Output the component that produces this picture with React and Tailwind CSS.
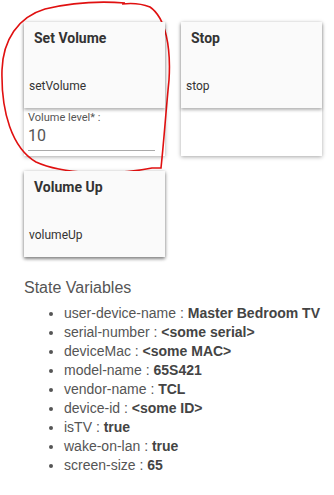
import React from 'react';

const stateVars = [
  ['user-device-name', 'Master Bedroom TV'],
  ['serial-number', '<some serial>'],
  ['deviceMac', '<some MAC>'],
  ['model-name', '65S421'],
  ['vendor-name', 'TCL'],
  ['device-id', '<some ID>'],
  ['isTV', 'true'],
  ['wake-on-lan', 'true'],
  ['screen-size', '65'],
];

function CommandCard({ title, cmd, children, extra }) {
  return (
    <div className="w-[141px] flex flex-col shadow-[0_1px_4px_rgba(0,0,0,0.35)]">
      <div className="h-[86px] bg-[#fafafa] flex flex-col shadow-[0_2px_3px_rgba(0,0,0,0.3)] relative z-10">
        <div className="pl-[10px] pt-[6px] text-[14px] font-bold text-[#333] font-['Roboto',sans-serif]">{title}</div>
        <div className="pl-[5px] mt-[28px] text-[12px] text-[#333] font-['Roboto',sans-serif]">{cmd}</div>
      </div>
      {extra && <div className="h-[48px] bg-white">{children}</div>}
    </div>
  );
}

export default function App() {
  return (
    <div className="relative w-[334px] h-[495px] bg-white overflow-hidden">
      <div className="pl-[24px] pt-[22px]">
        <div className="flex gap-[16px]">
          <CommandCard title="Set Volume" cmd="setVolume" extra>
            <div className="px-[4px] pt-[3px] font-['Roboto',sans-serif]">
              <div className="text-[11px] text-[#555] leading-[14px]">Volume level* :</div>
              <div className="text-[16px] text-[#555] leading-[20px] mt-[1px] border-b border-[#aaa] pb-[4px] mr-[6px]">10</div>
            </div>
          </CommandCard>
          <CommandCard title="Stop" cmd="stop" extra />
        </div>
        <div className="mt-[15px]">
          <CommandCard title="Volume Up" cmd="volumeUp" />
        </div>
        <div className="mt-[21px] text-[16px] text-[#555] font-['Liberation_Sans',Arial,sans-serif] leading-[20px]">State Variables</div>
        <ul className="mt-[6px] pl-[40px] list-disc text-[14px] text-[#555] font-['Liberation_Sans',Arial,sans-serif] leading-[19px]">
          {stateVars.map(([k, v]) => (
            <li key={k}>
              {k} : <span className="font-bold text-[#444]">{v}</span>
            </li>
          ))}
        </ul>
      </div>
      <svg className="absolute left-0 top-0 pointer-events-none" width="334" height="200" viewBox="0 0 334 200">
        <path
          d="M125,3 C100,1 70,3 45,9 C18,17 3,40 2,70 C1,112 12,148 36,162 C62,174 112,176 152,168 L161,168 C164,140 166,110 169,80 C171,48 166,18 150,7 C140,3 130,3 122,4"
          fill="none"
          stroke="#e01010"
          strokeWidth="1.6"
        />
      </svg>
    </div>
  );
}
